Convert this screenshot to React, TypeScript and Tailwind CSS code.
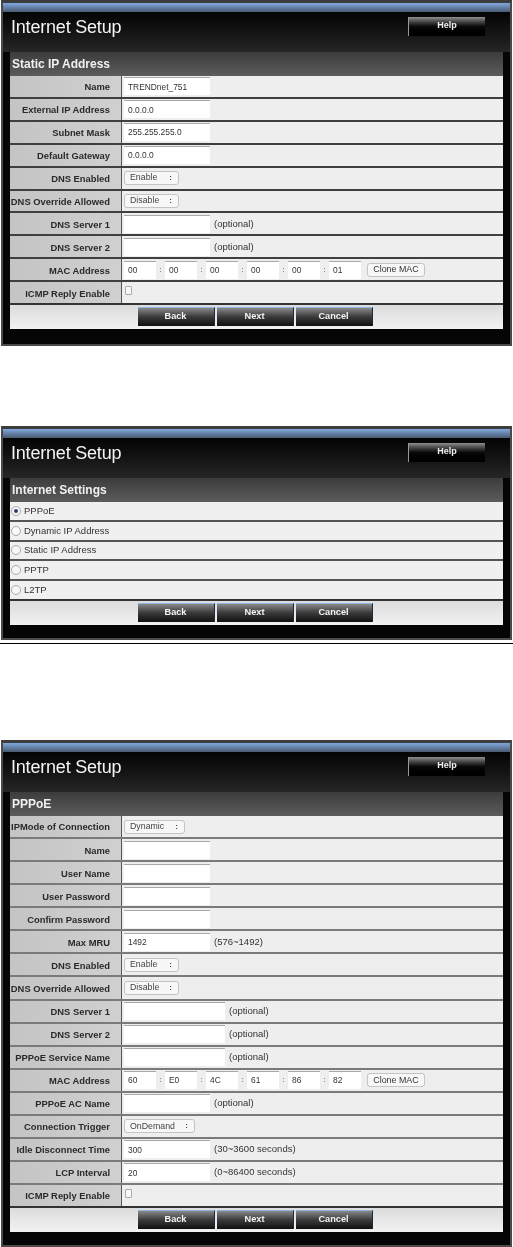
import React from "react";

const LineCtx = React.createContext("border-[#3f3f3f]");

const Box = ({ w, children }: { w: string; children?: React.ReactNode }) => (
  <div className={`${w} h-[18px] shrink-0 flex items-center pl-[4px] bg-white border-t border-[#a8a8a8] text-[8.4px] text-[#333]`}>{children}</div>
);

const Sel = ({ w, children }: { w: string; children: React.ReactNode }) => (
  <div className={`${w} h-[14px] shrink-0 flex items-center justify-between pl-[5px] pr-[6px] bg-[#f7f7f7] border border-[#c4c4c4] rounded-[3px] text-[8.8px] text-[#444]`}>
    <span>{children}</span>
    <span className="text-[8px] font-bold">:</span>
  </div>
);

const Note = ({ children }: { children: React.ReactNode }) => (
  <span className="ml-[4px] text-[9.5px] text-[#333] whitespace-nowrap">{children}</span>
);

const Row = ({ label, children }: { label: string; children?: React.ReactNode }) => {
  const line = React.useContext(LineCtx);
  return (
    <div className={`flex flex-1 min-h-0 border-b-2 ${line} last:border-b-0`}>
      <div className="w-[111px] shrink-0 flex items-center justify-end pr-[11px] pt-[2px] bg-gradient-to-r from-[#c4c4c4] to-[#d0d0d0] text-[9.4px] font-bold text-[#2a2a2a] whitespace-nowrap">
        {label}
      </div>
      <div className="w-px shrink-0 bg-[#555]" />
      <div className="flex-1 flex items-center pl-[2px] bg-[#eeeeee]">{children}</div>
    </div>
  );
};

const Mac = ({ vals }: { vals: string[] }) => (
  <>
    {vals.map((v, i) => (
      <React.Fragment key={i}>
        {i > 0 && <span className="w-[9px] text-center text-[8px] text-[#444]">:</span>}
        <Box w="w-[32px]">{v}</Box>
      </React.Fragment>
    ))}
    <div className="ml-[6px] w-[58px] h-[14px] flex items-center justify-center bg-[#f7f7f7] border border-[#c4c4c4] rounded-[3px] text-[8.9px] text-[#333]">Clone MAC</div>
  </>
);

const Check = () => <div className="w-[7px] h-[9px] mb-[4px] ml-[1px] bg-[#f7f7f7] border border-[#aaa] rounded-[1px]" />;

const Btn = ({ children }: { children: string }) => (
  <div className="w-[77px] h-[19px] flex items-center justify-center bg-gradient-to-b from-[#8a8a8a] via-[#3a3a3a] to-[#111] border-t border-[#8fb4e0] border-r border-r-[#1a2a40] text-[9.2px] font-bold text-[#f4f4f4]">{children}</div>
);

const Panel = ({ title, h, bodyH, line, children }: { title: string; h: string; bodyH: string; line: string; children: React.ReactNode }) => (
  <LineCtx.Provider value={line}>
    <div className={`${h} mx-[1px] flex flex-col bg-[#050505] border-2 border-[#4a4a4a] border-t-[3px] border-t-[#3c3c3c]`}>
      <div className="h-[9px] shrink-0 bg-gradient-to-b from-[#80a9e0] to-[#4a5a70]" />
      <div className="h-[40px] shrink-0 flex items-start justify-between pl-[8px] pr-[25px] pt-[5px] bg-gradient-to-b from-[#050505] to-[#262626]">
        <span className="text-[18px] leading-[21px] tracking-[-0.2px] text-[#f4f4f4]">Internet Setup</span>
        <div className="w-[77px] h-[19px] pb-[2px] flex items-center justify-center bg-gradient-to-b from-[#8f8f8f] via-[#0a0a0a] to-[#000] border-l border-[#999] text-[9px] font-bold text-[#eee]">Help</div>
      </div>
      <div className="mx-[7px] flex flex-col">
        <div className="h-[24px] shrink-0 flex items-center pl-[2px] pb-[1px] bg-gradient-to-b from-[#3c3c3c] to-[#5c5c5c] text-[12px] font-bold text-[#f0f0f0]">{title}</div>
        <div className={`${bodyH} flex flex-col`}>{children}</div>
        <div className="h-[26px] shrink-0 flex items-center justify-center gap-[2px] pr-[3px] pb-[2px] border-t-2 border-[#333] bg-gradient-to-b from-[#dcdcdc] to-[#f2f2f2]">
          <Btn>Back</Btn>
          <Btn>Next</Btn>
          <Btn>Cancel</Btn>
        </div>
      </div>
    </div>
  </LineCtx.Provider>
);

const Radio = ({ label, on }: { label: string; on?: boolean }) => (
  <div className="flex flex-1 min-h-0 items-center pl-[1px] gap-[3px] bg-[#f0f0f0] border-b-2 border-[#555] text-[9.5px] text-[#333] last:border-b-0">
    <div className="w-[10px] h-[10px] rounded-full bg-[#f8f8f8] border border-[#aaa] flex items-center justify-center">
      {on && <div className="w-[4px] h-[4px] rounded-full bg-[#2a3f6a]" />}
    </div>
    {label}
  </div>
);

export default function App() {
  return (
    <div className="w-[513px] h-[1247px] overflow-hidden bg-white blur-[0.5px] font-['Liberation_Sans',Arial,sans-serif]">
      <Panel title="Static IP Address" h="h-[346px]" bodyH="h-[227px]" line="border-[#3f3f3f]">
        <Row label="Name"><Box w="w-[86px]">TRENDnet_751</Box></Row>
        <Row label="External IP Address"><Box w="w-[86px]">0.0.0.0</Box></Row>
        <Row label="Subnet Mask"><Box w="w-[86px]">255.255.255.0</Box></Row>
        <Row label="Default Gateway"><Box w="w-[86px]">0.0.0.0</Box></Row>
        <Row label="DNS Enabled"><Sel w="w-[55px]">Enable</Sel></Row>
        <Row label="DNS Override Allowed"><Sel w="w-[55px]">Disable</Sel></Row>
        <Row label="DNS Server 1"><Box w="w-[86px]" /><Note>(optional)</Note></Row>
        <Row label="DNS Server 2"><Box w="w-[86px]" /><Note>(optional)</Note></Row>
        <Row label="MAC Address"><Mac vals={["00", "00", "00", "00", "00", "01"]} /></Row>
        <Row label="ICMP Reply Enable"><Check /></Row>
      </Panel>

      <div className="h-[80px]" />

      <Panel title="Internet Settings" h="h-[214px]" bodyH="h-[97px]" line="border-[#555]">
        <Radio label="PPPoE" on />
        <Radio label="Dynamic IP Address" />
        <Radio label="Static IP Address" />
        <Radio label="PPTP" />
        <Radio label="L2TP" />
      </Panel>

      <div className="mt-[3px] h-px bg-black" />
      <div className="h-[96px]" />

      <Panel title="PPPoE" h="h-[507px]" bodyH="h-[390px]" line="border-[#7a7a7a]">
        <Row label="IPMode of Connection"><Sel w="w-[61px]">Dynamic</Sel></Row>
        <Row label="Name"><Box w="w-[86px]" /></Row>
        <Row label="User Name"><Box w="w-[86px]" /></Row>
        <Row label="User Password"><Box w="w-[86px]" /></Row>
        <Row label="Confirm Password"><Box w="w-[86px]" /></Row>
        <Row label="Max MRU"><Box w="w-[86px]">1492</Box><Note>(576~1492)</Note></Row>
        <Row label="DNS Enabled"><Sel w="w-[55px]">Enable</Sel></Row>
        <Row label="DNS Override Allowed"><Sel w="w-[55px]">Disable</Sel></Row>
        <Row label="DNS Server 1"><Box w="w-[101px]" /><Note>(optional)</Note></Row>
        <Row label="DNS Server 2"><Box w="w-[101px]" /><Note>(optional)</Note></Row>
        <Row label="PPPoE Service Name"><Box w="w-[101px]" /><Note>(optional)</Note></Row>
        <Row label="MAC Address"><Mac vals={["60", "E0", "4C", "61", "86", "82"]} /></Row>
        <Row label="PPPoE AC Name"><Box w="w-[86px]" /><Note>(optional)</Note></Row>
        <Row label="Connection Trigger"><Sel w="w-[71px]">OnDemand</Sel></Row>
        <Row label="Idle Disconnect Time"><Box w="w-[86px]">300</Box><Note>(30~3600 seconds)</Note></Row>
        <Row label="LCP Interval"><Box w="w-[86px]">20</Box><Note>(0~86400 seconds)</Note></Row>
        <Row label="ICMP Reply Enable"><Check /></Row>
      </Panel>
    </div>
  );
}
